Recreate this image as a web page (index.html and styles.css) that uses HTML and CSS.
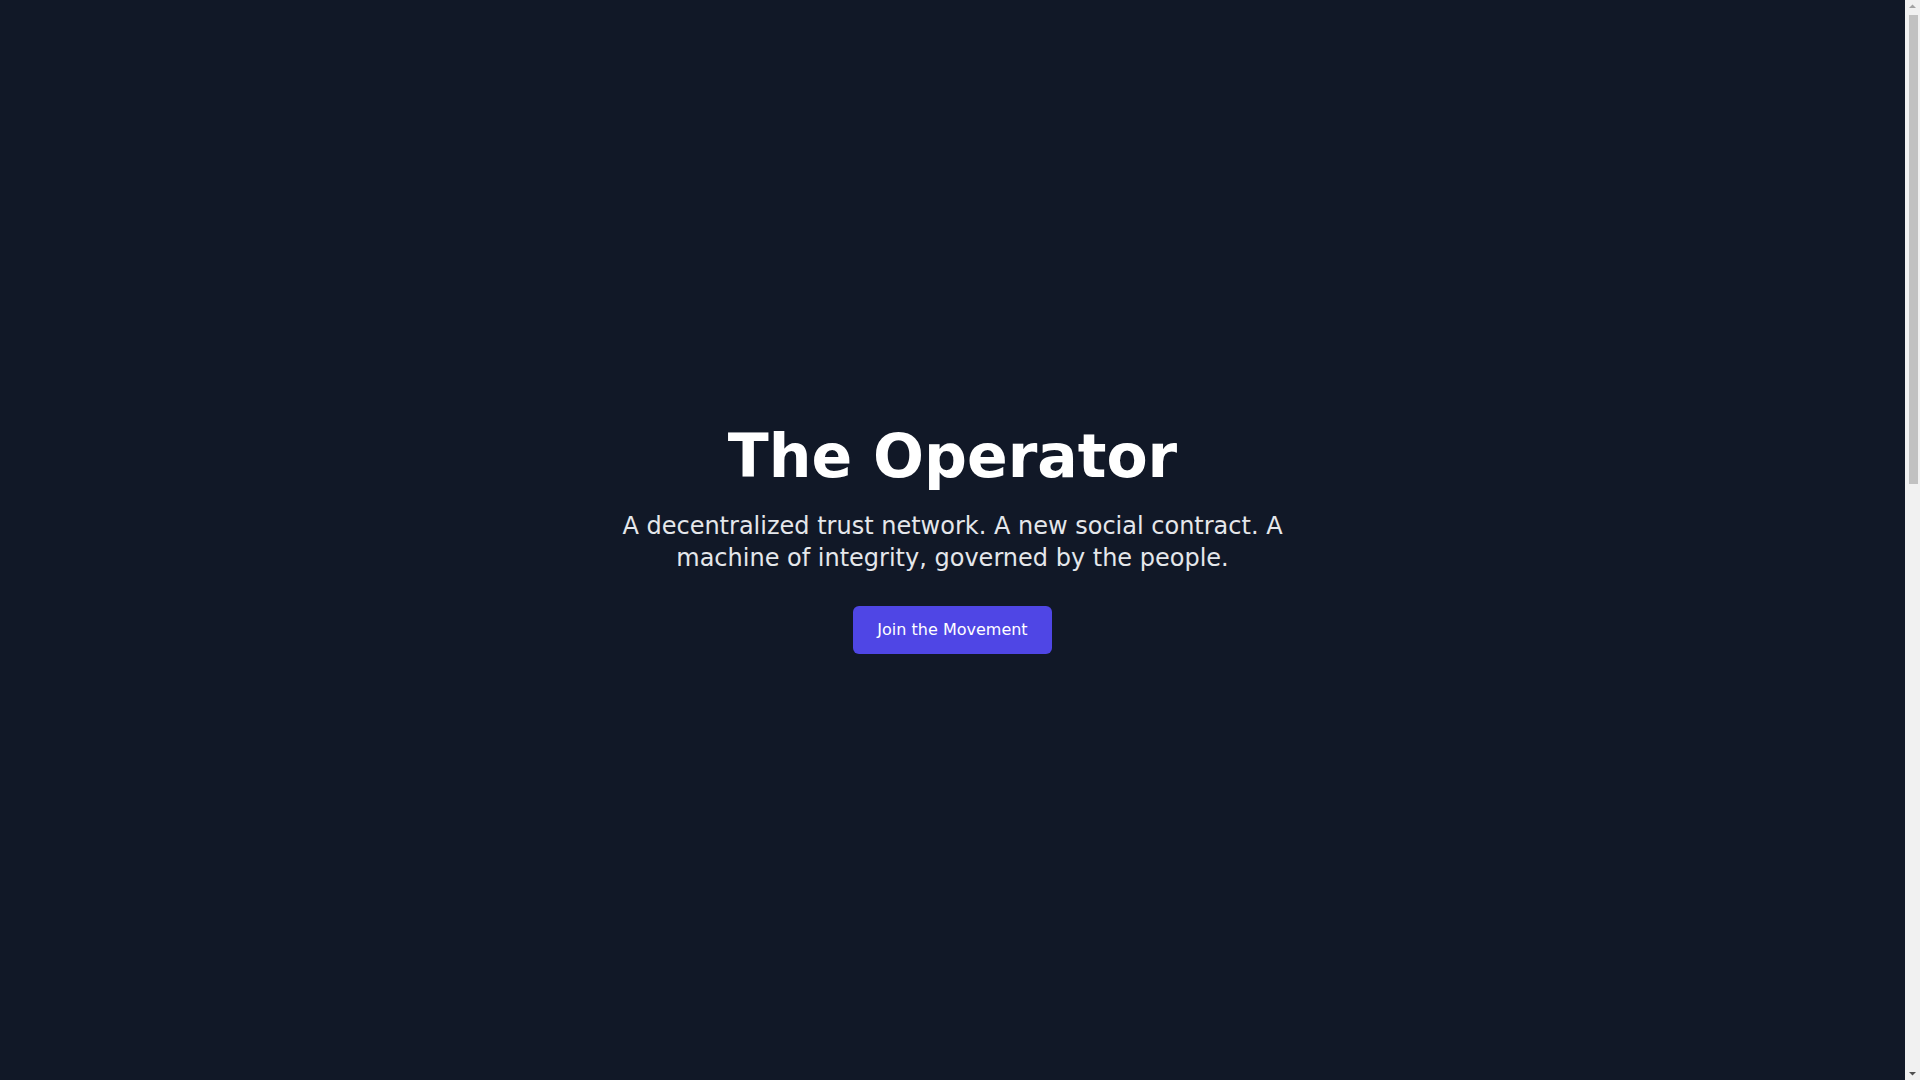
FILE: index.html
```html
<!DOCTYPE html>
<html lang="en">
<head>
<meta charset="utf-8">
<title>The Operator</title>
<link rel="stylesheet" href="styles.css">
</head>
<body>
<main class="page">
  <section class="hero">
    <h1 class="hero-title">The Operator</h1>
    <p class="hero-text">A decentralized trust network. A new social contract. A machine of integrity, governed by the people.</p>
    <a class="hero-button" href="#join">Join the Movement</a>
  </section>
  <section class="below" id="join"></section>
</main>
<div class="scrollbar" aria-hidden="true">
  <svg class="scroll-arrow scroll-arrow-up" width="15" height="15" viewBox="0 0 15 15"><polygon points="4,8 7.5,4.5 11,8" fill="#a3a3a3"/></svg>
  <div class="scroll-thumb"></div>
  <div class="scroll-rest"></div>
  <svg class="scroll-arrow" width="15" height="15" viewBox="0 0 15 15"><polygon points="4,7 11,7 7.5,10.5" fill="#505050"/></svg>
</div>
</body>
</html>
```
FILE: styles.css
```css
html, body {
  margin: 0;
  padding: 0;
  background: #111827;
}
body {
  font-family: "DejaVu Sans", "Noto Sans", sans-serif;
  color: #ffffff;
  padding-right: 15px;
}
.page {
  display: flex;
  flex-direction: column;
}
.hero {
  height: 100vh;
  display: flex;
  flex-direction: column;
  align-items: center;
  justify-content: center;
  text-align: center;
  padding: 0 16px;
  box-sizing: border-box;
}
.hero-title {
  margin: 0 0 24px;
  font-size: 60px;
  line-height: 1;
  font-weight: 700;
  color: #ffffff;
}
.hero-text {
  margin: 0 0 32px;
  max-width: 672px;
  font-size: 24px;
  line-height: 32px;
  color: #e5e7eb;
}
.hero-button {
  display: inline-block;
  padding: 12px 24px;
  font-size: 16px;
  line-height: 24px;
  color: #ffffff;
  background: #4f46e5;
  border-radius: 6px;
  text-decoration: none;
}
.below {
  height: 1340px;
}
.scrollbar {
  position: fixed;
  top: 0;
  right: 0;
  width: 15px;
  height: 100vh;
  background: #f1f1f1;
  display: flex;
  flex-direction: column;
  align-items: center;
}
.scroll-arrow {
  display: block;
  flex: none;
}
.scroll-thumb {
  flex: none;
  width: 9px;
  height: 469px;
  margin-left: 2px;
  background: #c1c1c1;
}
.scroll-rest {
  flex: 1;
}
```
